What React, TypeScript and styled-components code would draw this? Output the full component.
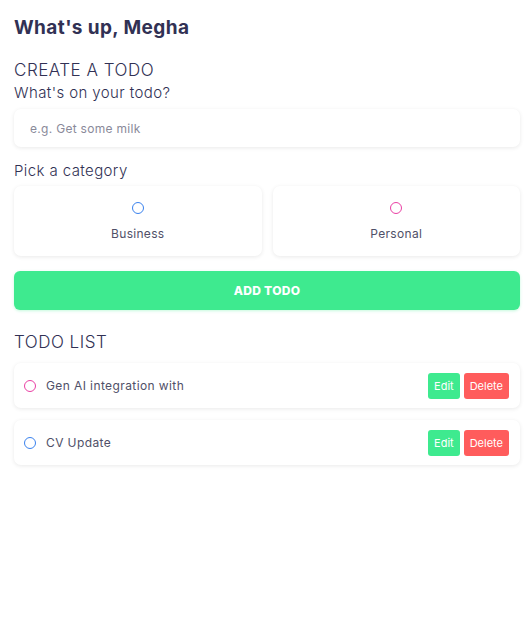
import * as React from 'react';
import styled, {createGlobalStyle} from "styled-components";

const GlobalStyle = createGlobalStyle`
    * {
        box-sizing: border-box;
        margin: 0;
        padding: 0;
    }
    body {
        background: #fff;
        font-family: Inter, "Open Sans", sans-serif;
        color: #313154;
    }
`

type Category = "business" | "personal";

const todos: { id: number; content: string; category: Category }[] = [
    {id: 1, content: "Gen AI integration with", category: "personal"},
    {id: 2, content: "CV Update", category: "business"},
];

const colors: Record<Category, string> = {
    business: "#3a82ee",
    personal: "#ea40a4",
};

export default function App() {
    return (
        <StyledApp>
            <GlobalStyle/>
            <Greeting>What's up, Megha</Greeting>

            <Section>
                <SectionTitle>CREATE A TODO</SectionTitle>
                <Label>What's on your todo?</Label>
                <TextInput placeholder="e.g. Get some milk"/>

                <Label $top={13}>Pick a category</Label>
                <Options>
                    <Option>
                        <Bubble $color={colors.business}/>
                        <OptionName>Business</OptionName>
                    </Option>
                    <Option>
                        <Bubble $color={colors.personal}/>
                        <OptionName>Personal</OptionName>
                    </Option>
                </Options>

                <AddButton>ADD TODO</AddButton>
            </Section>

            <Section>
                <SectionTitle $top={20}>TODO LIST</SectionTitle>
                <List>
                    {todos.map(todo => (
                        <TodoItem key={todo.id}>
                            <Bubble $color={colors[todo.category]}/>
                            <TodoText>{todo.content}</TodoText>
                            <Actions>
                                <SmallButton $bg="#3eea8f">Edit</SmallButton>
                                <SmallButton $bg="#ff5c5c">Delete</SmallButton>
                            </Actions>
                        </TodoItem>
                    ))}
                </List>
            </Section>
        </StyledApp>
    );
}

const StyledApp = styled.main`
    padding: 16px 12px 40px 14px;
`
const Greeting = styled.h2`
    font-size: 19px;
    font-weight: 700;
    line-height: 24px;
    letter-spacing: 0.4px;
    color: #313154;
`
const Section = styled.section`
    display: flex;
    flex-direction: column;
`
const SectionTitle = styled.h3<{ $top?: number }>`
    margin-top: ${p => p.$top ?? 18}px;
    font-size: 17px;
    font-weight: 300;
    line-height: 24px;
    letter-spacing: 0.5px;
    color: #313154;
`
const Label = styled.h4<{ $top?: number }>`
    margin-top: ${p => p.$top ?? 0}px;
    font-size: 15px;
    font-weight: 300;
    line-height: 22px;
    letter-spacing: 0.4px;
    color: #313154;
`
const TextInput = styled.input`
    margin-top: 5px;
    height: 38px;
    width: 100%;
    border: none;
    border-radius: 7px;
    padding: 0 16px;
    font-family: inherit;
    font-size: 12px;
    letter-spacing: 0.3px;
    color: #313154;
    background: #fff;
    box-shadow: 0 1px 4px rgba(0, 0, 0, 0.09);
    outline: none;

    &::placeholder {
        color: #8a8a9a;
    }
`
const Options = styled.div`
    margin-top: 4px;
    display: grid;
    grid-template-columns: 1fr 1fr;
    gap: 11px;
`
const Option = styled.label`
    height: 70px;
    display: flex;
    flex-direction: column;
    align-items: center;
    justify-content: center;
    gap: 12px;
    background: #fff;
    border-radius: 7px;
    box-shadow: 0 1px 4px rgba(0, 0, 0, 0.09);
`
const Bubble = styled.span<{ $color: string }>`
    display: block;
    flex: none;
    width: 12px;
    height: 12px;
    border-radius: 50%;
    border: 1.5px solid ${p => p.$color};
`
const OptionName = styled.span`
    font-size: 12px;
    letter-spacing: 0.3px;
    color: #505068;
`
const AddButton = styled.button`
    margin-top: 15px;
    height: 39px;
    width: 100%;
    border: none;
    border-radius: 6px;
    background: #3eea8f;
    color: #fff;
    font-family: inherit;
    font-size: 12px;
    font-weight: 800;
    letter-spacing: 0.3px;
    box-shadow: 0 1px 3px rgba(62, 234, 143, 0.3);
`
const List = styled.div`
    margin-top: 9px;
    display: flex;
    flex-direction: column;
    gap: 12px;
`
const TodoItem = styled.div`
    height: 45px;
    display: flex;
    align-items: center;
    padding: 0 11px 0 10px;
    background: #fff;
    border-radius: 7px;
    box-shadow: 0 1px 4px rgba(0, 0, 0, 0.09);
`
const TodoText = styled.span`
    flex: 1;
    margin-left: 10px;
    font-size: 12px;
    letter-spacing: 0.4px;
    color: #505068;
`
const Actions = styled.div`
    display: flex;
    gap: 4px;
`
const SmallButton = styled.button<{ $bg: string }>`
    height: 26px;
    padding: 0 6px;
    border: none;
    border-radius: 3px;
    background: ${p => p.$bg};
    color: #fff;
    font-family: inherit;
    font-size: 11px;
`
